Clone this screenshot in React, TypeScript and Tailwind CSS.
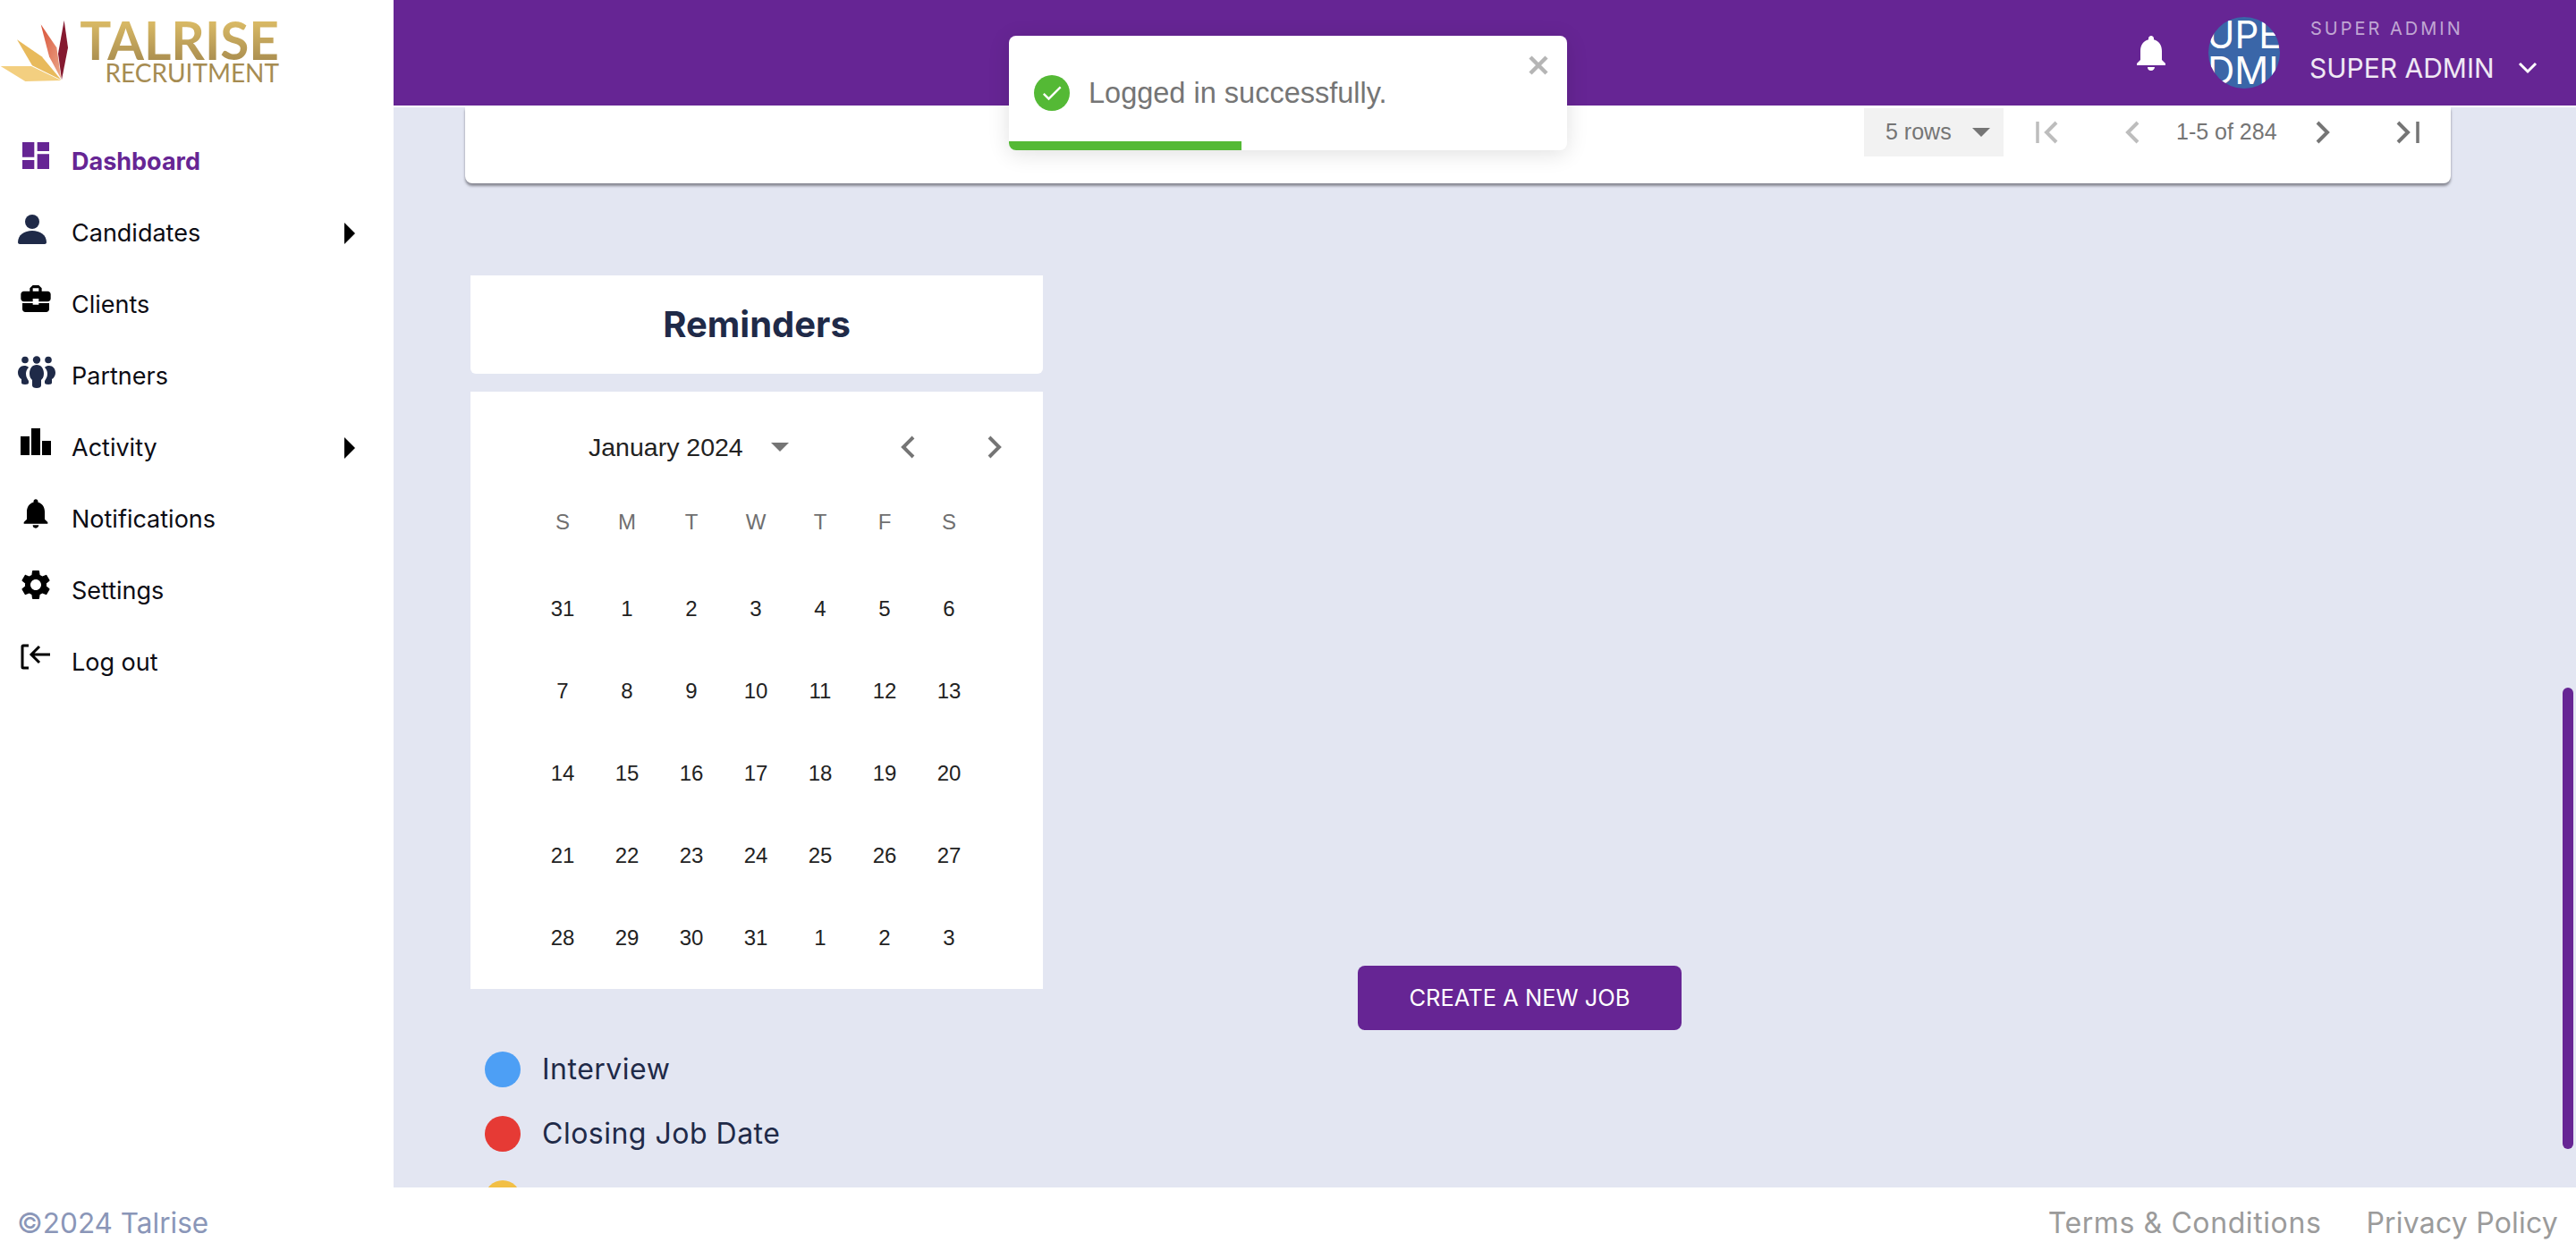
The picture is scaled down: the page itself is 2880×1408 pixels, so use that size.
import React from "react";
import { MdDashboard, MdBusinessCenter, MdNotifications, MdSettings, MdCheck } from "react-icons/md";

const SANS = "font-['Inter','Noto_Sans',sans-serif]";
const HELV = "font-['Liberation_Sans',Arial,sans-serif]";

const Person = () => (
  <svg width="40" height="40" viewBox="0 0 40 40" fill="#1f2a48" className="-translate-x-[2px]">
    <circle cx="18" cy="14" r="8" />
    <path d="M2 37c0-8 7-13 16-13s16 5 16 13c0 1-1 2-2 2H4c-1 0-2-1-2-2z" />
  </svg>
);

const Groups = () => (
  <svg width="44" height="36" viewBox="0 0 44 36" fill="#1f2a48" className="translate-x-[1px] translate-y-[2px]">
    <circle cx="9" cy="4.5" r="3.8" />
    <circle cx="22" cy="4.5" r="4.2" />
    <circle cx="35" cy="4.5" r="3.8" />
    <path d="M22 10c5 0 8 4 8 10 0 4-2 6-3 7v6c0 2-2 3-5 3s-5-1-5-3v-6c-1-1-3-3-3-7 0-6 3-10 8-10z" />
    <path d="M8 11c2 0 4 .5 5 2-2 2-3 4-3 7 0 4 2 6 3 8v2c0 1-1 2-4 2s-4-1-4-2v-4c-2-1-4-4-4-7 0-5 3-8 7-8z" />
    <path d="M36 11c-2 0-4 .5-5 2 2 2 3 4 3 7 0 4-2 6-3 8v2c0 1 1 2 4 2s4-1 4-2v-4c2-1 4-4 4-7 0-5-3-8-7-8z" />
  </svg>
);

const Bars = () => (
  <svg width="40" height="40" viewBox="0 0 40 40" fill="#000">
    <rect x="3" y="14" width="10" height="21" />
    <rect x="15" y="5" width="10" height="30" />
    <rect x="27" y="19" width="10" height="16" />
  </svg>
);

const LogOut = () => (
  <svg width="40" height="40" viewBox="0 0 40 40" fill="none" stroke="#000" strokeWidth="3">
    <path d="M12 8H6a1 1 0 0 0-1 1v23a1 1 0 0 0 1 1h6" />
    <path d="M36 18H15M24 9l-9 9 9 9" />
  </svg>
);

const Caret = () => (
  <svg width="12" height="24" viewBox="0 0 12 24" fill="#000">
    <polygon points="0,0 12,12 0,24" />
  </svg>
);

const Tri = ({ w = 20, h = 10, c = "#757575" }: { w?: number; h?: number; c?: string }) => (
  <svg width={w} height={h} viewBox="0 0 20 10" preserveAspectRatio="none" fill={c}>
    <polygon points="0,0 20,0 10,10" />
  </svg>
);

const Chev = ({ dir, c = "#757575", bar = false }: { dir: "l" | "r"; c?: string; bar?: boolean }) => (
  <svg width={bar ? 26 : 16} height="26" viewBox={bar ? "0 0 26 26" : "0 0 16 26"} fill="none" stroke={c} strokeWidth="4">
    {dir === "l" ? (
      <>
        {bar && <path d="M2 1v24" strokeWidth="3.5" />}
        <path d={bar ? "M23 2 12 13l11 11" : "M14 2 3 13l11 11"} />
      </>
    ) : (
      <>
        <path d="M2 2l11 11L2 24" />
        {bar && <path d="M24 1v24" strokeWidth="3.5" />}
      </>
    )}
  </svg>
);

const nav: { label: string; icon: React.ReactNode; caret?: boolean; active?: boolean }[] = [
  { label: "Dashboard", icon: <MdDashboard size={40} color="#662594" />, active: true },
  { label: "Candidates", icon: <Person />, caret: true },
  { label: "Clients", icon: <MdBusinessCenter size={40} color="#000" /> },
  { label: "Partners", icon: <Groups /> },
  { label: "Activity", icon: <Bars />, caret: true },
  { label: "Notifications", icon: <MdNotifications size={40} color="#000" /> },
  { label: "Settings", icon: <MdSettings size={40} color="#000" /> },
  { label: "Log out", icon: <LogOut /> },
];

const weeks = [
  [31, 1, 2, 3, 4, 5, 6],
  [7, 8, 9, 10, 11, 12, 13],
  [14, 15, 16, 17, 18, 19, 20],
  [21, 22, 23, 24, 25, 26, 27],
  [28, 29, 30, 31, 1, 2, 3],
];

const Logo = () => (
  <div className="flex h-[141px] items-start">
    <svg width="80" height="90" viewBox="0 0 240 270" className="mt-[10px] shrink-0">
      <defs>
        <linearGradient id="pet" x1="0" y1="0" x2="1" y2="1">
          <stop offset="0" stopColor="#d9533a" />
          <stop offset="1" stopColor="#eba98a" />
        </linearGradient>
      </defs>
      <polygon points="2,192 105,192 205,240 85,243" fill="#f3cf80" />
      <polygon points="57,103 140,160 205,238 108,190" fill="#e8ba5c" />
      <polygon points="137,52 190,130 205,235 165,160" fill="url(#pet)" />
      <polygon points="215,38 228,130 207,238 195,150" fill="#851a30" />
    </svg>
    <div className="ml-[8px] mt-[19px] flex w-[224px] flex-col items-end font-['Lato',sans-serif]">
      <div className="bg-gradient-to-b from-[#dfbf68] to-[#aa8e50] bg-clip-text text-[58.5px] font-bold leading-[50px] text-transparent">
        TALRISE
      </div>
      <div className="text-[28px] leading-[24px] text-[#a68c52]">RECRUITMENT</div>
    </div>
  </div>
);

export default function App() {
  return (
    <div className={`relative flex h-[1408px] w-[2880px] flex-col overflow-hidden bg-white ${SANS}`}>
      <div className="flex min-h-0 flex-1">
        <aside className="w-[440px] shrink-0 bg-white">
          <Logo />
          <nav>
            {nav.map((n) => (
              <div key={n.label} className="flex h-[80px] items-center">
                <div className="mb-[14px] ml-[18px] flex h-[40px] w-[44px] items-center justify-center">{n.icon}</div>
                <span
                  className={
                    n.active
                      ? "ml-[18px] text-[27px] font-bold text-[#662594]"
                      : "ml-[18px] text-[27px] text-[#0c0c14]"
                  }
                >
                  {n.label}
                </span>
                {n.caret && (
                  <div className="ml-auto mr-[43px]">
                    <Caret />
                  </div>
                )}
              </div>
            ))}
          </nav>
        </aside>

        <div className="flex min-w-0 flex-1 flex-col">
          <header className="flex h-[120px] shrink-0 items-center border-b-2 border-white bg-[#662594] text-white">
            <div className="ml-auto flex items-center">
              <MdNotifications size={48} color="#fff" />
              <div className="ml-[40px] flex h-[80px] w-[80px] flex-col items-center justify-center overflow-hidden rounded-full bg-[#3a66a8] text-[42px] leading-[40px] text-white">
                <span>SUPER</span>
                <span>ADMIN</span>
              </div>
              <div className="mb-[4px] ml-[34px] flex w-[210px] flex-col">
                <span className="text-[20px] leading-[28px] tracking-[3px] text-white/60">SUPER ADMIN</span>
                <span className="-ml-[1px] mt-[10px] text-[30px] leading-[40px] text-white/90">SUPER ADMIN</span>
              </div>
              <svg width="22" height="14" viewBox="0 0 22 14" fill="none" stroke="#fff" strokeWidth="3" className="ml-[22px] mr-[43px] mt-[34px]">
                <path d="M2 2l9 9 9-9" />
              </svg>
            </div>
          </header>

          <main className="relative min-h-0 flex-1 overflow-hidden bg-[#e3e6f2]">
            <div className={`ml-[80px] flex h-[85px] w-[2220px] items-start rounded-b-[8px] bg-white shadow-[0_3px_3px_rgba(60,60,70,0.55)] ${HELV}`}>
              <div className="ml-auto flex items-center text-[25px] text-[#757575]">
                <div className="mt-px flex h-[54px] w-[156px] items-center bg-[#f2f2f2] pl-[24px]">
                  <span>5 rows</span>
                  <span className="ml-[23px]">
                    <Tri />
                  </span>
                </div>
                <div className="ml-[36px]">
                  <Chev dir="l" bar c="#bdbdbd" />
                </div>
                <div className="ml-[74px]">
                  <Chev dir="l" c="#bdbdbd" />
                </div>
                <span className="ml-[41px] w-[120px] whitespace-nowrap">1-5 of 284</span>
                <div className="ml-[36px]">
                  <Chev dir="r" />
                </div>
                <div className="ml-[74px] mr-[35px]">
                  <Chev dir="r" bar />
                </div>
              </div>
            </div>

            <div className="ml-[86px] mt-[103px] flex">
              <div className="w-[640px] shrink-0">
                <div className="flex h-[110px] items-center justify-center rounded-b-[6px] bg-white text-[40px] font-bold text-[#1f2a48]">
                  Reminders
                </div>
                <div className={`mt-[20px] h-[668px] bg-white ${HELV}`}>
                  <div className="flex h-[124px] items-center pl-[132px] pr-[46px]">
                    <span className="text-[28.5px] text-[#222]">January 2024</span>
                    <span className="ml-[31px] flex">
                      <Tri />
                    </span>
                    <span className="ml-auto flex">
                      <Chev dir="l" />
                    </span>
                    <span className="ml-[81px] flex">
                      <Chev dir="r" />
                    </span>
                  </div>
                  <div className="ml-[67px] grid h-[44px] w-[504px] grid-cols-7 items-center text-center text-[24px] text-[#6f6f6f]">
                    {["S", "M", "T", "W", "T", "F", "S"].map((d, i) => (
                      <span key={i}>{d}</span>
                    ))}
                  </div>
                  <div className="ml-[67px] mt-[29px] w-[504px]">
                    {weeks.map((w, i) => (
                      <div key={i} className="grid h-[92px] grid-cols-7 items-center text-center text-[24px] text-[#222]">
                        {w.map((d, j) => (
                          <span key={j}>{d}</span>
                        ))}
                      </div>
                    ))}
                  </div>
                </div>
                <div className="mt-[70px] flex flex-col gap-[32px] pl-[16px] text-[32px] tracking-[0.5px] text-[#1f2a48]">
                  <div className="flex h-[40px] items-center gap-[24px]">
                    <span className="h-[40px] w-[40px] rounded-full bg-[#4d9ff5]" />
                    <span>Interview</span>
                  </div>
                  <div className="flex h-[40px] items-center gap-[24px]">
                    <span className="h-[40px] w-[40px] rounded-full bg-[#e63a35]" />
                    <span>Closing Job Date</span>
                  </div>
                  <div className="flex h-[40px] items-center gap-[24px]">
                    <span className="h-[40px] w-[40px] rounded-full bg-[#f2bf45]" />
                  </div>
                </div>
              </div>
              <div className="flex w-[1066px] shrink-0 justify-center pt-[772px]">
                <button className="flex h-[72px] w-[362px] items-center justify-center rounded-[8px] bg-[#662594] text-[25.5px] text-white">
                  CREATE A NEW JOB
                </button>
              </div>
            </div>

            <div className="absolute bottom-[43px] right-[3px] h-[516px] w-[12px] rounded-full bg-[#662594]" />
          </main>
        </div>
      </div>

      <footer className="flex h-[80px] shrink-0 items-center bg-white pl-[19px] pr-[20px] text-[32px]">
        <span className="text-[31.5px] text-[#8a96b8]">©2024 Talrise</span>
        <span className="ml-auto tracking-[0.6px] text-[#9b9b9b]">Terms &amp; Conditions</span>
        <span className="ml-[50px] tracking-[0.2px] text-[#9b9b9b]">Privacy Policy</span>
      </footer>

      <div className={`absolute left-[1128px] top-[40px] h-[128px] w-[624px] overflow-hidden rounded-[8px] bg-white shadow-[0_4px_24px_rgba(0,0,0,0.12)] ${HELV}`}>
        <div className="flex h-[118px] items-center pl-[28px] pt-[10px]">
          <span className="flex h-[40px] w-[40px] items-center justify-center rounded-full bg-[#54b935]">
            <MdCheck size={28} color="#fff" />
          </span>
          <span className="ml-[21px] text-[32.5px] text-[#757575]">Logged in successfully.</span>
        </div>
        <svg width="22" height="22" viewBox="0 0 22 22" stroke="#b5b5b5" strokeWidth="4.5" className="absolute right-[21px] top-[22px]">
          <path d="M2 2l18 18M20 2 2 20" />
        </svg>
        <div className="h-[10px] w-[260px] bg-[#54b935]" />
      </div>
    </div>
  );
}
